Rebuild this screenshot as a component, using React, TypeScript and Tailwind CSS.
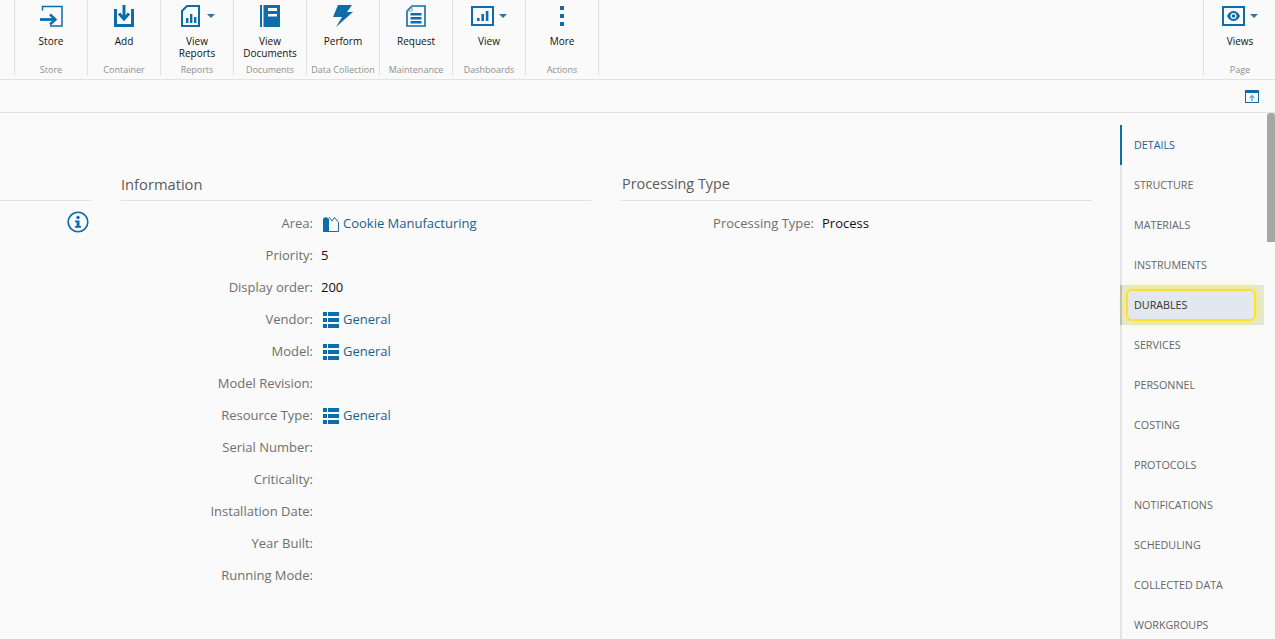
const B = "#0f6cab";

function Caret() {
  return <svg width="8" height="4" viewBox="0 0 8 4" className="block"><path d="M0 0h8L4 4z" fill="#2f74a8" /></svg>;
}

const icons: Record<string, React.ReactNode> = {
  store: (
    <svg width="23" height="22" viewBox="0 0 23 22">
      <path d="M2.5 5.5V1.5h19.5v19.5H10" fill="none" stroke={B} strokeWidth="1.5" />
      <path d="M0 14.5h15" stroke={B} strokeWidth="2.8" fill="none" />
      <path d="M10 9.5l5.5 5-5.5 5" stroke={B} strokeWidth="2.4" fill="none" />
    </svg>
  ),
  add: (
    <svg width="20" height="22" viewBox="0 0 20 22">
      <path d="M1.5 4v16.5h17V4" fill="none" stroke={B} strokeWidth="3" />
      <path d="M10 0v13" stroke={B} strokeWidth="3" />
      <path d="M5 8.5l5 5.5 5-5.5" stroke={B} strokeWidth="3" fill="none" />
    </svg>
  ),
  report: (
    <svg width="19" height="22" viewBox="0 0 19 22">
      <path d="M6 1h12v20H1V6z" fill="none" stroke={B} strokeWidth="2" />
      <path d="M5 18h2.4v-5H5zM9 18h2.4V9H9zM13 18h2.4v-6H13z" fill={B} />
    </svg>
  ),
  doc: (
    <svg width="20" height="22" viewBox="0 0 20 22">
      <path d="M0 0h2v22H0zM3.5 0H20v22H3.5z" fill={B} />
      <path d="M8 3h9v3H8zM8 9h9v2.5H8z" fill="#fafafa" />
    </svg>
  ),
  bolt: (
    <svg width="20" height="22" viewBox="0 0 20 22">
      <path d="M5 0h14l-5 7h6L3 22l6-10H0z" fill={B} />
    </svg>
  ),
  request: (
    <svg width="20" height="22" viewBox="0 0 20 22">
      <path d="M6 1h13v20H1V6z" fill="none" stroke={B} strokeWidth="1.6" />
      <path d="M6 1v5H1" fill="none" stroke="#6f9dbd" strokeWidth="1" />
      <path d="M4.5 8h11v2.4h-11zM4.5 12h11v2.4h-11zM4.5 16h11v2.4h-11z" fill={B} />
    </svg>
  ),
  dash: (
    <svg width="23" height="20" viewBox="0 0 23 20">
      <rect x="1" y="1" width="21" height="18" fill="none" stroke={B} strokeWidth="2" />
      <path d="M6 15h2.6v-3H6zM10.4 15H13V8h-2.6zM14.8 15h2.6V5h-2.6z" fill={B} />
    </svg>
  ),
  more: (
    <svg width="6" height="20" viewBox="0 0 6 20">
      <path d="M1 0h4v4H1zM1 8h4v4H1zM1 16h4v4H1z" fill={B} />
    </svg>
  ),
  eye: (
    <svg width="23" height="20" viewBox="0 0 23 20">
      <rect x="1" y="1" width="21" height="18" fill="none" stroke={B} strokeWidth="2" />
      <path d="M5 10c3-6.7 10-6.7 13 0-3 6.7-10 6.7-13 0z" fill={B} />
      <circle cx="11.5" cy="10" r="3" fill="#fafafa" />
      <circle cx="11.5" cy="10" r="1.7" fill={B} />
    </svg>
  ),
};

function Group({ icon, title, group, caret }: { icon: string; title: string[]; group: string; caret?: boolean }) {
  return (
    <div className="relative flex h-[75px] w-[73px] flex-col items-center border-l border-[#e0e0e0]">
      <div className={`relative flex h-[30px] w-full shrink-0 items-center justify-center pt-[2px] ${caret ? "pr-[14px]" : ""}`}>
        {icons[icon]}
        {caret && <span className="absolute left-[46px] top-[14px]"><Caret /></span>}
      </div>
      <div className="mt-[5px] flex h-[24px] shrink-0 flex-col items-center text-[10px] leading-[12px] text-[#111]">
        {title.map((t) => <span key={t}>{t}</span>)}
      </div>
      <div className="mt-[5px] shrink-0 whitespace-nowrap text-[9px] leading-[12px] text-[#8f8f8f]">{group}</div>
    </div>
  );
}

function Link({ kind, text }: { kind: "area" | "list"; text: string }) {
  return (
    <span className="flex items-center gap-[4px] pl-[2px] text-[#1d5f8c]">
      {kind === "area" ? (
        <svg width="16" height="16" viewBox="0 0 16 16">
          <path d="M0 2.5L3 1l3 2v13H0z" fill={B} />
          <path d="M6 1l3 4 2.5-3.5 4 5v9H6" fill="none" stroke={B} strokeWidth="1" />
        </svg>
      ) : (
        <svg width="16" height="16" viewBox="0 0 16 16">
          <path d="M0 0h4v4H0zM5 0h11v4H5zM0 6h4v4H0zM5 6h11v4H5zM0 12h4v4H0zM5 12h11v4H5z" fill={B} />
        </svg>
      )}
      {text}
    </span>
  );
}

function Row({ label, children }: { label: string; children?: React.ReactNode }) {
  return (
    <div className="flex h-[32px] items-center">
      <div className="w-[192px] text-right text-[#6f6f6f]">{label}</div>
      <div className="ml-[8px] flex-1 text-[#111]">{children}</div>
    </div>
  );
}

const nav = ["DETAILS", "STRUCTURE", "MATERIALS", "INSTRUMENTS", "DURABLES", "SERVICES", "PERSONNEL", "COSTING", "PROTOCOLS", "NOTIFICATIONS", "SCHEDULING", "COLLECTED DATA", "WORKGROUPS"];

export default function App() {
  return (
    <div className="flex h-[639px] w-[1275px] flex-col overflow-hidden bg-[#fafafa] text-[13px] font-['Open_Sans',sans-serif]">
      <header className="flex h-[80px] shrink-0 border-b border-[#e2e2e2] pl-[14px]">
        <Group icon="store" title={["Store"]} group="Store" />
        <Group icon="add" title={["Add"]} group="Container" />
        <Group icon="report" title={["View", "Reports"]} group="Reports" caret />
        <Group icon="doc" title={["View", "Documents"]} group="Documents" />
        <Group icon="bolt" title={["Perform"]} group="Data Collection" />
        <Group icon="request" title={["Request"]} group="Maintenance" />
        <Group icon="dash" title={["View"]} group="Dashboards" caret />
        <Group icon="more" title={["More"]} group="Actions" />
        <div className="h-[75px] border-l border-[#e0e0e0]" />
        <div className="-mr-px ml-auto">
          <Group icon="eye" title={["Views"]} group="Page" caret />
        </div>
      </header>

      <div className="flex h-[33px] shrink-0 items-center justify-end border-b border-[#e2e2e2] pr-[16px]">
        <svg width="14" height="13" viewBox="0 0 14 13">
          <rect x=".5" y=".5" width="13" height="12" fill="#f4f9fc" stroke={B} />
          <path d="M0 0h14v3H0z" fill={B} />
          <path d="M7 11V5.5M4.5 8L7 5.5 9.5 8" fill="none" stroke="#3d7fae" />
        </svg>
      </div>

      <div className="flex min-h-0 flex-1">
        <main className="flex flex-1 pt-[60px]">
          <div className="h-[28px] w-[91px] border-b border-[#e2e2e2]" />
          <section className="ml-[30px] w-[470px]">
            <h2 className="h-[28px] border-b border-[#e2e2e2] text-[14.7px] font-medium leading-[22px] text-[#5c5c5c]">Information</h2>
            <div className="relative mt-[7px]">
              <svg className="absolute left-[-54px] top-[3px]" width="22" height="22" viewBox="0 0 22 22">
                <circle cx="11" cy="11" r="9.8" fill="none" stroke={B} strokeWidth="1.6" />
                <circle cx="11" cy="6.5" r="1.7" fill={B} />
                <path d="M8 9.5h4.5V15H14v1.7H8V15h1.6v-3.8H8z" fill={B} />
              </svg>
              <Row label="Area:"><Link kind="area" text="Cookie Manufacturing" /></Row>
              <Row label="Priority:">5</Row>
              <Row label="Display order:">200</Row>
              <Row label="Vendor:"><Link kind="list" text="General" /></Row>
              <Row label="Model:"><Link kind="list" text="General" /></Row>
              <Row label="Model Revision:" />
              <Row label="Resource Type:"><Link kind="list" text="General" /></Row>
              <Row label="Serial Number:" />
              <Row label="Criticality:" />
              <Row label="Installation Date:" />
              <Row label="Year Built:" />
              <Row label="Running Mode:" />
            </div>
          </section>
          <section className="ml-[30px] w-[471px]">
            <h2 className="h-[28px] border-b border-[#e2e2e2] pl-px text-[14.4px] font-medium leading-[22px] text-[#5c5c5c]">Processing Type</h2>
            <div className="mt-[7px] pl-[1px]">
              <Row label="Processing Type:">Process</Row>
            </div>
          </section>
        </main>

        <aside className="flex w-[183px] shrink-0">
          <nav className="ml-[28px] mt-[12px] w-[144px] border-l-2 border-[#e4e4e4]">
            {nav.map((n, i) => (
              <div key={n} className={`relative -ml-[2px] flex h-[40px] items-center border-l-2 pl-[12px] pt-[1px] text-[10.75px] ${i === 0 ? "border-[#0f6cab] text-[#1d5f8c]" : i === 4 ? "border-[#b9bdb3] bg-[#e4e8d6] text-[#333]" : "border-transparent text-[#666]"}`}>
                {i === 4 && <span className="absolute bottom-[4px] left-[4px] right-[8px] top-[4px] rounded-[6px] border-[2.5px] border-[#ffe02e] bg-[#e1e8f0] shadow-[0_0_10px_#ffe95c]" />}
                <span className="relative">{n}</span>
              </div>
            ))}
          </nav>
          <div className="ml-auto h-[129px] w-[8px] rounded-t-[3px] bg-[#a6a6a6]" />
        </aside>
      </div>
    </div>
  );
}
